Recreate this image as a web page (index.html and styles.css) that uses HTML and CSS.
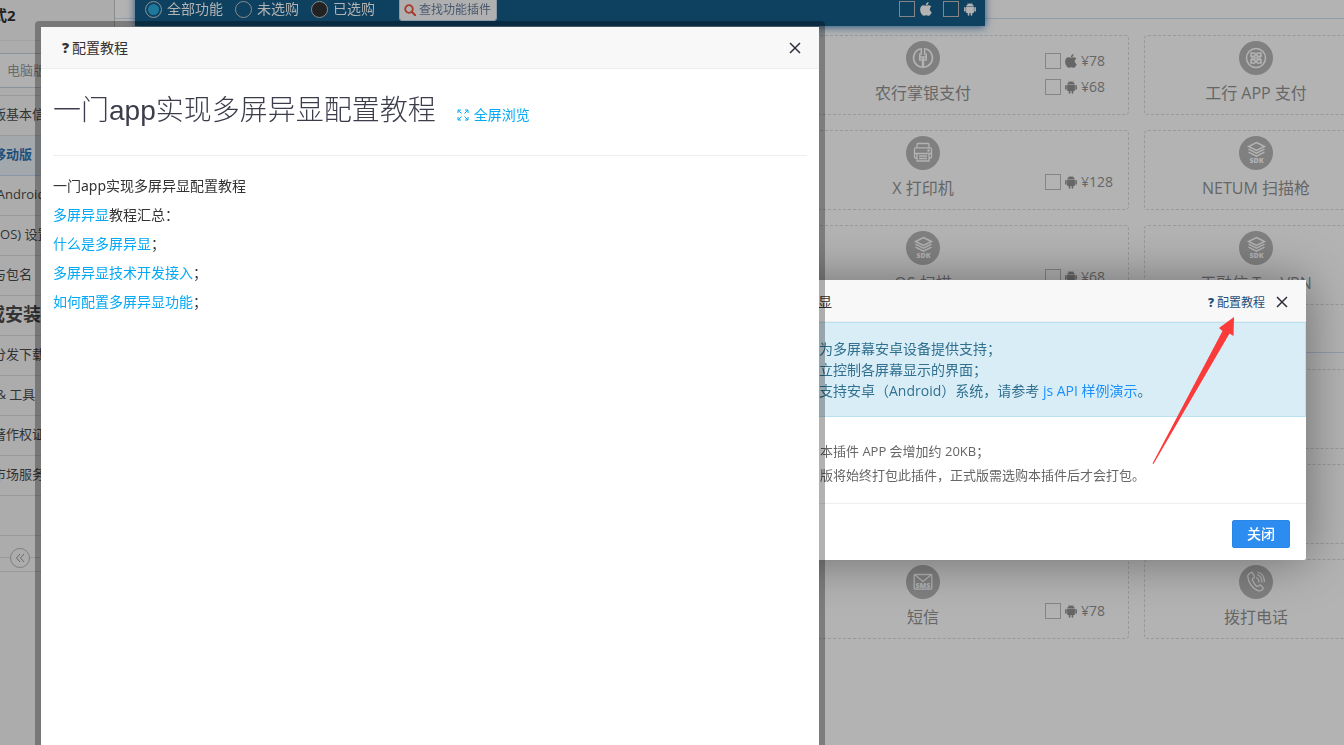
FILE: index.html
```html
<!DOCTYPE html>
<html lang="zh-CN">
<head>
<meta charset="utf-8">
<title>配置教程</title>
<link rel="stylesheet" href="styles.css">
</head>
<body>
<svg class="sprite" aria-hidden="true">
  <symbol id="apple" viewBox="190 0 1420 1680"><path fill="currentColor" d="M1585 1215q-39 125-123 250-129 196-257 196-49 0-140-32-86-32-151-32-61 0-142 33-81 34-132 34-152 0-301-259-147-261-147-503 0-228 113-374 113-144 284-144 72 0 177 30 104 30 138 30 45 0 143-34 102-34 173-34 119 0 213 65 52 36 104 100-79 67-114 118-65 94-65 207 0 124 69 223t158 126zm-376-1173q0 61-29 136-30 75-93 138-54 54-108 72-37 11-104 17 3-149 78-257 74-107 250-148 1 3 2.5 11t2.5 11q0 4 .5 10t.5 10z"/></symbol>
  <symbol id="android" viewBox="1 .500 12 13.400"><path fill="currentColor" d="M4.6.6l.8 1.3A4 4 0 0 1 7 1.600a4 4 0 0 1 1.600.3L9.400.6l.3.2-.8 1.300A3.600 3.600 0 0 1 10.900 4.800H3.100A3.600 3.600 0 0 1 5.100 2.100L4.300.8zM3.100 5.200h7.800v5.200a.9.9 0 0 1-.9.9h-.7v1.700a.85.85 0 0 1-1.700 0v-1.700H6.400v1.700a.85.85 0 0 1-1.700 0v-1.700H4a.9.9 0 0 1-.9-.9zM1.100 5.900a.8.8 0 0 1 1.600 0v3.300a.8.8 0 0 1-1.600 0zM11.300 5.900a.8.8 0 0 1 1.600 0v3.300a.8.8 0 0 1-1.600 0z"/></symbol>
  <symbol id="close" viewBox="0 0 12 12"><path d="M1 1l10 10M11 1L1 11" fill="none" stroke="currentColor" stroke-width="1.500"/></symbol>
  <symbol id="sdk" viewBox="0 0 34 34"><g fill="none" stroke="currentColor" stroke-width="1.400"><path d="M17.500 6.500l8 4-8 4-8-4z"/><path d="M9.500 13.200l8 4 8-4M9.500 16.200l8 4 8-4"/></g><text x="17.500" y="27" text-anchor="middle" class="tiny">SDK</text></symbol>
  <symbol id="printer" viewBox="0 0 34 34"><g fill="none" stroke="currentColor" stroke-width="1.300"><path d="M11 11.500V8.500q0-1 1-1h10q1 0 1 1v3"/><path d="M11 22H9.500q-1 0-1-1v-8q0-1.200 1-1.200h15q1 0 1 1.200v8q0 1-1 1H23"/><path d="M11 17.500h12v7.500H11zM13 20h8M13 22.500h8M9 17.500h16"/></g><circle cx="22.500" cy="14.500" r="1.200" fill="currentColor"/></symbol>
  <symbol id="abc" viewBox="0 0 34 34"><g fill="none" stroke="currentColor"><path d="M14.500 7.800a9.400 9.400 0 1 0 5 0" stroke-width="1.700"/><path d="M17 16v10" stroke-width="2.400"/><path d="M15.300 7v7M18.700 7v7" stroke-width="1.500"/><path d="M13.800 12.500v6.500h6.400v-6.500M13.800 16h6.400" stroke-width="1.600"/></g></symbol>
  <symbol id="icbc" viewBox="0 0 34 34"><g fill="none" stroke="currentColor" stroke-width="1.500"><circle cx="17" cy="17" r="9.500"/><path d="M16.200 12H12v3.300h4.200M17.800 12H22v3.300h-4.200M16.200 22H12v-3.300h4.200M17.800 22H22v-3.300h-4.200M12 17h10M16.200 12v3.300M17.800 12v3.300M16.200 18.700V22M17.800 18.700V22"/></g></symbol>
  <symbol id="sms" viewBox="0 0 34 34"><g fill="none" stroke="currentColor" stroke-width="1.300"><path d="M9 9.500h16q.8 0 .8.800v13q0 .8-.8.800H9q-.8 0-.8-.8v-13q0-.8.8-.8zM9 10l8 6.500L25 10"/></g><text x="17" y="23" text-anchor="middle" class="tiny">SMS</text></symbol>
  <symbol id="phone" viewBox="0 0 34 34"><g fill="none" stroke="currentColor" stroke-width="1.300"><path d="M9.500 9.500l2.500-2q1-.6 1.600.4l1.700 3.300q.4 1-.4 1.600l-1.300 1q-.5.6 0 1.800 1.500 3.500 3.700 5.300 1 .8 1.700.3l1.400-1q.9-.5 1.500.2l2 2.300q.6.900-.2 1.700-2.200 2.200-4.800 1.300C13 23.200 9 16.500 8.800 11.500q0-1.400.7-2z"/><path d="M17 12.500q3 1 3 5M18 9.500q5 1.500 5 8M18.500 7q7 2 7 10"/></g></symbol>
</svg>

<div class="page">
  <aside class="sidebar">
    <div class="app-name">式2</div>
    <div class="platform"><button type="button">电脑版</button></div>
    <nav>
      <a href="#">版基本信息</a>
      <a href="#" class="active">移动版</a>
      <a href="#">(Android</a>
      <a href="#">(iOS) 设置</a>
      <a href="#">与包名</a>
      <h2>或安装</h2>
      <a href="#">分发下载</a>
      <a href="#">&nbsp;&amp; 工具</a>
      <a href="#">著作权证</a>
      <a href="#">市场服务</a>
    </nav>
    <div class="collapse"><button type="button" aria-label="收起"><svg viewBox="0 0 10 10"><path d="M5 1L1.500 5 5 9M9 1L5.500 5 9 9" fill="none" stroke="currentColor"/></svg></button></div>
  </aside>

  <main class="content">
    <section class="group">
      <div class="cards">
        <article class="card third">
          <div class="face"><svg class="round"><use href="#abc"/></svg><h3>农行掌银支付</h3></div>
          <div class="prices">
            <label><input type="checkbox"><svg><use href="#apple"/></svg>¥78</label>
            <label><input type="checkbox"><svg><use href="#android"/></svg>¥68</label>
          </div>
        </article>
        <article class="card">
          <div class="face"><svg class="round"><use href="#icbc"/></svg><h3>工行 APP 支付</h3></div>
        </article>
        <article class="card third">
          <div class="face"><svg class="round"><use href="#printer"/></svg><h3>X 打印机</h3></div>
          <div class="prices"><label><input type="checkbox"><svg><use href="#android"/></svg>¥128</label></div>
        </article>
        <article class="card">
          <div class="face"><svg class="round"><use href="#sdk"/></svg><h3>NETUM 扫描枪</h3></div>
        </article>
        <article class="card third">
          <div class="face"><svg class="round"><use href="#sdk"/></svg><h3>OS 扫描</h3></div>
          <div class="prices"><label><input type="checkbox"><svg><use href="#android"/></svg>¥68</label></div>
        </article>
        <article class="card">
          <div class="face"><svg class="round"><use href="#sdk"/></svg><h3>天融信 TopVPN</h3></div>
        </article>
      </div>
    </section>
    <section class="group">
      <div class="cards">
        <article class="card third"></article>
        <article class="card"></article>
        <article class="card third"></article>
        <article class="card"></article>
        <article class="card third">
          <div class="face"><svg class="round"><use href="#sms"/></svg><h3>短信</h3></div>
          <div class="prices"><label><input type="checkbox"><svg><use href="#android"/></svg>¥78</label></div>
        </article>
        <article class="card">
          <div class="face"><svg class="round"><use href="#phone"/></svg><h3>拨打电话</h3></div>
        </article>
      </div>
    </section>
  </main>
</div>

<div class="toolbar">
  <label><input type="radio" name="scope" checked>全部功能</label>
  <label><input type="radio" name="scope">未选购</label>
  <label><input type="radio" name="scope" class="dark">已选购</label>
  <button type="button" class="find"><svg viewBox="0 0 12 12"><path d="M8 8l3.200 3.200" stroke="currentColor" stroke-width="2" stroke-linecap="round"/><circle cx="5" cy="5" r="3.800" fill="none" stroke="currentColor" stroke-width="1.800"/></svg>查找功能插件</button>
  <div class="systems">
    <label><input type="checkbox" aria-label="iOS"><svg><use href="#apple"/></svg></label>
    <label><input type="checkbox" aria-label="Android"><svg><use href="#android"/></svg></label>
  </div>
</div>

<div class="dialog" role="dialog" aria-label="显">
  <header>
    <span class="name">显</span>
    <a href="#" class="help"><b>?</b>配置教程</a>
    <button type="button" class="close" aria-label="关闭"><svg><use href="#close"/></svg></button>
  </header>
  <div class="notice">
    <p>为多屏幕安卓设备提供支持；</p>
    <p>立控制各屏幕显示的界面；</p>
    <p>支持安卓（Android）系统，请参考 <a href="#">js API 样例演示</a>。</p>
  </div>
  <div class="remarks">
    <p>本插件 APP 会增加约 20KB；</p>
    <p>版将始终打包此插件，正式版需选购本插件后才会打包。</p>
  </div>
  <footer><button type="button" class="primary">关闭</button></footer>
</div>

<div class="drawer" role="dialog" aria-label="配置教程">
  <header>
    <span><b>?</b>配置教程</span>
    <button type="button" class="close" aria-label="关闭"><svg><use href="#close"/></svg></button>
  </header>
  <div class="article">
    <div class="heading">
      <h1>一门app实现多屏异显配置教程</h1>
      <a href="#"><svg viewBox="0 0 12 12"><g fill="none" stroke="currentColor"><path d="M1 4V1h3M8 1h3v3M11 8v3H8M4 11H1V8M1 1l3.500 3.500M11 1L7.500 4.500M11 11L7.500 7.500M1 11l3.500-3.500"/></g></svg>全屏浏览</a>
    </div>
    <p>一门app实现多屏异显配置教程</p>
    <p><a href="#">多屏异显</a>教程汇总：</p>
    <p><a href="#">什么是多屏异显</a>；</p>
    <p><a href="#">多屏异显技术开发接入</a>；</p>
    <p><a href="#">如何配置多屏异显功能</a>；</p>
  </div>
</div>

<svg class="arrow" viewBox="0 0 84 148" aria-hidden="true"><path fill="#fb3a3a" d="M82 0L67 11 70.500 14 .5 146.500l1 .5L77.500 16.500l4 2.500z"/></svg>
</body>
</html>
```

FILE: styles.css
```css
* { box-sizing: border-box; }

body {
  margin: 0;
  height: 100vh;
  overflow: hidden;
  background: #b3b3b3;
  color: #333;
  font: 14px/20px "Open Sans", "Noto Sans CJK SC", sans-serif;
}

h1, h2, h3, p { margin: 0; font-weight: 400; }
a { color: inherit; text-decoration: none; }
button { font: inherit; color: inherit; cursor: pointer; }
input { margin: 0; }
.sprite { position: absolute; width: 0; height: 0; }
.tiny { font: 800 7px "Open Sans", sans-serif; fill: currentColor; }

.page { display: flex; min-height: 100vh; overflow: hidden; }

/* Sidebar */
.sidebar {
  flex: 0 0 135px;
  margin-left: -20px;
  border-right: 1px solid #8c8c8c;
  background: #acacac;
  font-size: 13px;
}
.app-name {
  height: 41px;
  padding: 5px 0 0 12px;
  border-bottom: 1px solid #a2a2a2;
  color: #222;
  font-size: 15px;
  font-weight: 700;
}
.platform { padding: 12px 0 7px; border-bottom: 1px solid #9a9a9a; }
.platform button {
  display: block;
  width: 100%;
  height: 35px;
  padding: 0 0 2px 26px;
  border: 1px solid #8a929b;
  background: #b0b0b0;
  color: #6b6b6b;
  text-align: left;
}
.sidebar nav a, .sidebar h2 {
  display: block;
  height: 40px;
  padding-left: 13px;
  border-bottom: 1px solid #999;
  line-height: 36px;
  white-space: nowrap;
}
.sidebar nav .active {
  border-color: #8798a8;
  background: #a3a8ad;
  color: #1f4f7b;
  font-weight: 700;
}
.sidebar h2 { padding-left: 7px; font-size: 18px; font-weight: 700; }
.collapse {
  height: 76px;
  padding: 52px 0 0 30px;
  border-bottom: 1px solid #999;
  background: linear-gradient(#999, #999) 0 39px / 100% 1px no-repeat, linear-gradient(#999, #999) 0 61px / 100% 1px no-repeat;
}
.collapse button {
  display: grid;
  place-items: center;
  width: 20px;
  height: 20px;
  padding: 0;
  border: 1px solid #808080;
  border-radius: 50%;
  background: #acacac;
  color: #666;
}
.collapse svg { width: 10px; height: 10px; }

/* Feature cards */
.content { flex: 1; min-width: 0; padding: 18px 0 0 0; }
.group { padding: 16px 0 47px 30px; border-top: 1px solid #929daa; }
.cards {
  display: grid;
  grid-template-columns: repeat(4, 318px);
  grid-auto-rows: 80px;
  gap: 15px;
}
.card { display: flex; border: 1px dashed #999; border-radius: 4px; color: #666; }
.third { grid-column: 3; }
.face { width: 222px; padding-top: 5px; text-align: center; }
.face h3 { margin-top: 6px; font-size: 16px; line-height: 24px; }
.round {
  display: block;
  width: 34px;
  height: 34px;
  margin: 0 auto;
  border-radius: 50%;
  background: #808080;
  color: #b3b3b3;
}
.prices {
  display: flex;
  flex-direction: column;
  justify-content: flex-end;
  gap: 10px;
  padding: 0 0 19px 11px;
}
.prices label { display: flex; align-items: center; gap: 4px; height: 16px; }
.prices svg, .systems svg { width: 12px; height: 14px; }
input[type="checkbox"] {
  appearance: none;
  width: 16px;
  height: 16px;
  border: 1px solid #858585;
}

/* Filter bar */
.toolbar {
  position: fixed;
  top: -8px;
  left: 135px;
  display: flex;
  align-items: center;
  width: 850px;
  height: 34px;
  padding: 0 9px 0 10px;
  background: #0e4060;
  box-shadow: 0 1px 8px #24527e;
  color: #b3b3b3;
}
.toolbar label { display: flex; align-items: center; gap: 5px; margin-right: 12px; }
.toolbar input[type="radio"] {
  appearance: none;
  width: 17px;
  height: 17px;
  border: 1px solid #8b8b8b;
  border-radius: 50%;
}
.toolbar input:checked { background: #20779c; box-shadow: inset 0 0 0 2px #0e4060; }
.toolbar .dark { background: #222; }
.find {
  display: flex;
  align-items: center;
  gap: 3px;
  height: 24px;
  margin-left: 12px;
  padding: 2px 5px 0 4px;
  border: 1px solid #8b9aa6;
  border-radius: 3px;
  background: #b0b0b0;
  color: #49586f;
  font-size: 12px;
}
.find svg { width: 12px; height: 12px; color: #a83a2c; }
.systems { display: flex; gap: 11px; margin-left: auto; }
.systems label { gap: 5px; margin: 0; }

/* Plugin dialog */
.dialog {
  position: fixed;
  top: 280px;
  right: 38px;
  width: 600px;
  border-radius: 2px;
  background: #fff;
  box-shadow: 1px 1px 50px rgba(0, 0, 0, .4);
}
.dialog header {
  display: flex;
  align-items: center;
  height: 42px;
  padding: 2px 18px 0 112px;
  border-bottom: 1px solid #eee;
  background: #f8f8f8;
}
.dialog .help { margin-left: auto; color: #1f4f7b; font-size: 12px; padding-top: 3px; }
b { margin-right: 3px; font-weight: 800; }
.close { display: flex; padding: 0; border: 0; background: none; color: #2d2d37; }
.close svg { width: 12px; height: 12px; }
.dialog .close { margin-left: 11px; }
.notice {
  padding: 15px 20px;
  padding-left: 113px;
  border: 1px solid #b8e3ee;
  border-left: 0;
  background: #d9edf7;
  color: #31708f;
  line-height: 21px;
}
.notice a { color: #1890ff; }
.remarks {
  padding: 22px 20px 16px 114px;
  color: #666;
  font-size: 13px;
  line-height: 24px;
}
.dialog footer { display: flex; justify-content: flex-end; padding: 16px 16px 12px; border-top: 1px solid #eee; }
.primary {
  height: 28px;
  padding: 0 14px;
  border: 1px solid #2a87e6;
  border-radius: 2px;
  background: #2d8cf0;
  color: #fff;
  font-weight: 500;
}

/* Tutorial drawer */
.drawer {
  position: fixed;
  top: 21px;
  bottom: -6px;
  left: 35px;
  width: 790px;
  border: 6px solid rgba(0, 0, 0, .3);
  border-radius: 4px;
  background: #fff;
  background-clip: padding-box;
}
.drawer header {
  display: flex;
  align-items: center;
  justify-content: space-between;
  height: 42px;
  padding: 1px 18px 0 21px;
  border-bottom: 1px solid #eee;
  background: #f8f8f8;
}
.article { padding: 0 12px; font-family: "Noto Sans", "Noto Sans CJK SC", sans-serif; }
.heading {
  display: flex;
  align-items: baseline;
  gap: 21px;
  height: 87px;
  margin-bottom: 15px;
  padding-top: 22px;
  border-bottom: 1px solid #eee;
}
h1 {
  color: #3b3d4b;
  font: 300 28px/40px "Liberation Sans", "Noto Sans CJK SC", sans-serif;
}
.article a { color: #03a9f4; }
.article p { line-height: 29px; }
.heading svg { width: 12px; height: 12px; margin-right: 5px; vertical-align: -1px; }

/* Pointer to the tutorial link */
.arrow { position: fixed; top: 317px; right: 108px; width: 84px; height: 148px; pointer-events: none; }
```
